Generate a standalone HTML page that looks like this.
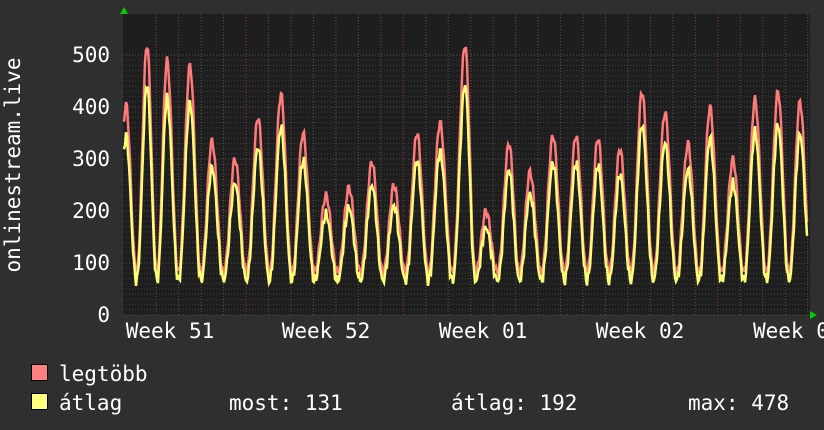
<!DOCTYPE html>
<html><head><meta charset="utf-8"><style>
html,body{margin:0;padding:0;background:#2f2f2f;width:824px;height:430px;overflow:hidden}
svg{display:block}
text{font-family:"DejaVu Sans Mono","Liberation Mono",monospace;fill:#fff;font-size:21px}
</style></head><body>
<svg id="s" width="824" height="430" xmlns="http://www.w3.org/2000/svg">
<rect width="824" height="430" fill="#2f2f2f"/>
<rect x="123" y="14" width="687" height="301" fill="#1e1e1e"/>
<g id="grid"></g>
<path id="red" fill="none" stroke="#ff7b7b" stroke-width="2.5"/>
<path id="yel" fill="none" stroke="#ffff77" stroke-width="2.5"/>
<polygon points="120,14 128,14 124,7" fill="#0c0"/>
<polygon points="810,311 810,319 817,315" fill="#0c0"/>
<text x="110" y="322" text-anchor="end">0</text>
<text x="110" y="270" text-anchor="end">100</text>
<text x="110" y="218" text-anchor="end">200</text>
<text x="110" y="166" text-anchor="end">300</text>
<text x="110" y="114" text-anchor="end">400</text>
<text x="110" y="62" text-anchor="end">500</text>
<text transform="translate(20,165) rotate(-90)" text-anchor="middle">onlinestream.live</text>
<text x="170" y="338" text-anchor="middle">Week 51</text>
<text x="326" y="338" text-anchor="middle">Week 52</text>
<text x="483" y="338" text-anchor="middle">Week 01</text>
<text x="640" y="338" text-anchor="middle">Week 02</text>
<text x="753" y="338">Week 0</text>
<rect x="31.5" y="364.5" width="16" height="16" fill="#ff8080" stroke="#000"/>
<rect x="31.5" y="393.5" width="16" height="16" fill="#ffff80" stroke="#000"/>
<text x="59" y="381">legtöbb</text>
<text x="59" y="410">átlag</text>
<text x="229" y="410">most: 131</text>
<text x="451" y="410">átlag: 192</text>
<text x="688" y="410">max: 478</text>
</svg>
<script>
var g=document.getElementById('grid'),h='';
for(var y=0;y<=500;y+=10){var py=315-y*0.52;if(py<14)break;
h+='<line x1="123" x2="810" y1="'+py+'" y2="'+py+'" stroke="'+(y%100==0?'#555':'#3c3c3c')+'" stroke-dasharray="1,2"/>';}
for(var k=-4;k<=27;k++){var x=246+k*22.47;if(x<123||x>810)continue;
var red=(k%7==0);
h+='<line x1="'+x+'" x2="'+x+'" y1="14" y2="315" stroke="'+(red?'#8a3a3a':'#555')+'" stroke-dasharray="1,2"/>';}
g.innerHTML=h;
var P=[[126,405],[147,520],[167,490],[190,480],[212,335],[235,300],[258,380],[281,425],[303,350],[326,230],[349,245],[372,295],[394,250],[417,350],[440,370],[465,520],[486,200],[509,330],[530,275],[553,345],[576,345],[598,340],[620,320],[642,430],[665,390],[688,330],[710,400],[733,300],[755,415],[778,430],[800,410]];
function val(x){
 for(var i=0;i<P.length-1;i++){if(x<=P[i+1][0])break;}
 var a=P[i],b=P[i+1]||[a[0]+22.4,a[1]];
 var t=(x-a[0])/(b[0]-a[0]);
 var tr=82;
 if(t<0.5){var f=Math.pow(Math.cos(t*Math.PI),2);return tr+(a[1]-tr)*Math.pow(f,1.1)}
 else{var f=Math.pow(Math.cos((1-t)*Math.PI),2);return tr+(b[1]-tr)*Math.pow(f,1.1)}
}
var r='',yl='';
for(var x=124;x<=807;x+=1){var v=val(x)+ (Math.sin(x*1.7)*8);
var vy=v*0.86-4+Math.sin(x*2.3)*5;
r+=(x==124?'M':'L')+x+','+(315-v*0.52).toFixed(1);
yl+=(x==124?'M':'L')+x+','+(315-vy*0.52).toFixed(1);}
document.getElementById('red').setAttribute('d',r);
document.getElementById('yel').setAttribute('d',yl);
</script>
</body></html>
